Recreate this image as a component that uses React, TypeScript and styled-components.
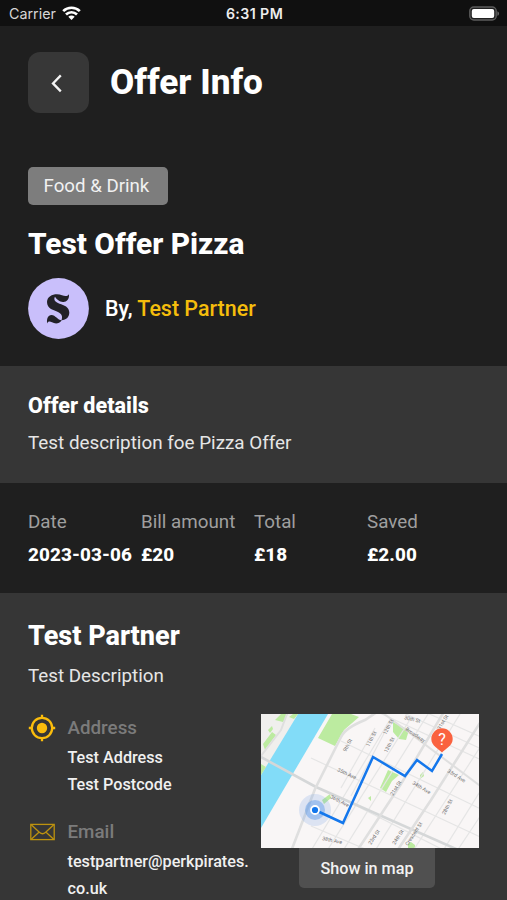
import React from "react";
import styled, { createGlobalStyle } from "styled-components";

const GlobalStyle = createGlobalStyle`
  * { box-sizing: border-box; }
  html, body { margin: 0; padding: 0; background: #1f1f1f; overflow: hidden; }
  body { font-family: Roboto, "Liberation Sans", sans-serif; color: #fff; }
  svg { display: block; flex: none; }
`;

const Screen = styled.main`
  width: 507px;
  height: 900px;
  overflow: hidden;
  display: flex;
  flex-direction: column;
  background: #1f1f1f;
`;

const StatusBar = styled.header`
  flex: none;
  height: 26px;
  padding: 1px 7px 0 9px;
  display: grid;
  grid-template-columns: 1fr auto 1fr;
  align-items: center;
  background: #101010;
  font-family: Inter, sans-serif;
  font-size: 14.3px;
  line-height: 25px;
  color: #d6d6d6;
`;

const Carrier = styled.div`
  display: flex;
  align-items: center;
  gap: 6px;
`;

const Clock = styled.time`
  font-weight: 600;
  font-size: 14.2px;
  letter-spacing: 0.4px;
  color: #ededed;
`;

const Battery = styled.div`
  justify-self: end;
`;

const Hero = styled.section`
  flex: none;
  height: 340px;
  padding: 26px 28px 0;
  display: flex;
  flex-direction: column;
  align-items: flex-start;
`;

const TitleRow = styled.div`
  display: flex;
  align-items: center;
  gap: 21.5px;
  height: 61px;
`;

const BackButton = styled.button`
  width: 60.5px;
  height: 61px;
  padding: 0;
  border: 0;
  border-radius: 12px;
  background: #373737;
  display: grid;
  place-items: center;
`;

const Text = styled.div<{ $size: number; $line: number; $weight?: number; $color?: string; $track?: number }>`
  font-size: ${(p) => p.$size}px;
  line-height: ${(p) => p.$line}px;
  font-weight: ${(p) => p.$weight ?? 400};
  color: ${(p) => p.$color ?? "#fff"};
  letter-spacing: ${(p) => p.$track ?? 0}px;
  white-space: nowrap;
`;

const Tag = styled.span`
  margin-top: 54px;
  height: 38px;
  width: 139.5px;
  padding-left: 15.5px;
  border-radius: 5px;
  background: #7d7d7d;
  color: #f1f1f1;
  font-size: 18.7px;
  line-height: 38px;
`;

const OfferTitle = styled.div`
  margin-top: 19px;
`;

const PartnerRow = styled.div`
  margin-top: 14px;
  display: flex;
  align-items: center;
  gap: 16px;
`;

const Accent = styled.span`
  color: #f5bd0c;
`;

const Details = styled.section`
  flex: none;
  height: 117px;
  padding: 26px 28px 0;
  background: #363636;
`;

const Amounts = styled.section`
  flex: none;
  height: 110px;
  padding: 26px 28px 0;
  display: grid;
  grid-template-columns: repeat(4, 113px);
`;

const Partner = styled.section`
  flex: 1;
  padding: 25px 28px 0;
  background: #363636;
  border-bottom: 1px solid #2a2224;
`;

const Columns = styled.div`
  margin-top: 16px;
  display: grid;
  grid-template-columns: 233px 218px;
  align-items: start;
`;

const Contacts = styled.div`
  display: flex;
  flex-direction: column;
  gap: 19.5px;
`;

const Contact = styled.div`
  display: grid;
  grid-template-columns: 39.5px 1fr;
`;

const ContactLines = styled.div`
  margin-top: 2px;
`;

const IconBox = styled.div`
  height: 28px;
  display: flex;
  align-items: center;
`;

const MapColumn = styled.div`
  display: flex;
  flex-direction: column;
  align-items: center;
`;

const MapButton = styled.button`
  width: 136px;
  height: 40px;
  margin-right: 6px;
  padding: 0;
  border: 0;
  border-radius: 0 0 5px 5px;
  background: #505050;
  color: #f2f2f2;
  font: 500 16.2px/39px Roboto, sans-serif;
`;

const WifiIcon = () => (
  <svg width="19" height="15" viewBox="0 0 19 15" fill="none" stroke="#fff" strokeWidth="2.7">
    <path d="M1.2 5.1C5.8.6 13.2.6 17.8 5.1" />
    <path d="M4 8.5C7.1 5.5 11.9 5.5 15 8.5" />
    <path d="M9.5 14 6.3 10.8C8.1 9.1 10.9 9.1 12.7 10.8Z" fill="#fff" stroke="none" />
  </svg>
);

const BatteryIcon = () => (
  <svg width="31" height="16" viewBox="0 0 31 16">
    <rect x=".8" y="1" width="26.4" height="13" rx="4" fill="#202020" stroke="#5c5c5c" strokeWidth="1.4" />
    <rect x="2.8" y="3" width="22.4" height="9" rx="2" fill="#fff" />
    <path d="M28.4 5.2C30.6 6 30.6 9 28.4 9.8Z" fill="#666" />
  </svg>
);

const ChevronIcon = () => (
  <svg width="14" height="20" viewBox="0 0 14 20" fill="none" stroke="#f4f4f4" strokeWidth="2.3">
    <path d="M9.8 2.4 2 10.4 9.8 18.4" />
  </svg>
);

const PartnerLogo = () => (
  <svg width="61" height="61" viewBox="0 0 61 61">
    <circle cx="30.5" cy="30.5" r="30.4" fill="#c9bffb" />
    <g fill="#222127">
      <path d="M40.9 16.2C39.6 18.4 37 18.4 34 17.2C28 14.8 19.2 17 19 24C19 31 26 32 30 34C33.5 35.7 35 38 33.5 42.2C38.5 42.2 41.3 39 41.3 34.6C41.3 28.8 36 27.3 31.5 25.7C27 24.1 25.3 21.6 27 18.8C29 21.8 32.5 24.8 36.5 23.8C40 22.9 41.4 19.7 40.9 16.2Z" />
      <path d="M19.2 45.4C18.4 40.8 20 37 23.5 37C27.5 37 29.5 42.2 33.8 42.2C31 46.2 27 46 24 44.3C21.5 43 20 43.4 19.2 45.4Z" />
    </g>
  </svg>
);

const TargetIcon = () => (
  <svg width="28" height="28" viewBox="0 0 28 28" fill="none" stroke="#fbbd0c" strokeWidth="2.3">
    <circle cx="14" cy="14" r="10.2" />
    <circle cx="14" cy="14" r="5.2" fill="#fbbd0c" stroke="none" />
    <path d="M14 .8V5M14 23v4.2M.8 14H5M23 14h4.2" />
  </svg>
);

const MailIcon = () => (
  <svg width="28" height="18" viewBox="0 0 28 18" fill="none" stroke="#bd920f" strokeWidth="1.3">
    <rect x="2.8" y="1.4" width="23.4" height="15.2" />
    <path d="M3 1.6 11.6 9.4Q14.5 12 17.4 9.4L26 1.6M3 16.4 11.2 9M26 16.4 17.8 9" />
  </svg>
);

const avenues = [
  "M108 -6 240 55", "M132 -6 240 44", "M155 -6 240 32", "M80 27 230 100",
  "M50 44 230 128", "M86 87 210 150", "M50 112 130 146",
];
const streets = [
  "M48 140 130 4", "M64 140 150 4", "M80 140 172 -8", "M112 140 204 -8",
  "M150 140 225 24", "M180 140 230 60", "M194 140 230 86",
  "M80 74 114 14", "M90 82 128 10",
];

const labels: [number, number, number, string][] = [
  [85, 38, -62, "9th St"], [76, 57, 25, "35th Ave"], [69, 84, 27, "36th Ave"], [61, 126, 12, "38th Ave"],
  [108, 33, -62, "11th St"], [125, 21, -62, "12th St"], [126, 39, -62, "13th St"],
  [179, 16, -58, "31st St"], [143, 5, 14, "30th St"], [186, 58, 32, "33rd Ave"], [151, 70, 31, "34th Ave"],
  [132, 82, -58, "21st St"], [184, 101, -62, "28th St"], [110, 131, -57, "23rd St"],
  [134, 131, -57, "24th St"], [147, 132, -57, "Crescent St"],
];

const RouteMap = () => (
  <svg width="218" height="134" viewBox="0 0 218 134">
    <rect width="218" height="134" fill="#f9f6f6" />
    <path d="M0 0H38L0 62Z" fill="#f0efed" />
    <path d="M37 0H67L0 114V61Z" fill="#82dcf8" />
    <g fill="#bceba0">
      <path d="M57 24 74 32 83 16 98 3 90 0H71Z" />
      <path d="M132 8 148 16 145 26 138 25 132 18Z" />
      <path d="M127 56 138 61 131 67 125 78 119 74Z" />
      <path d="M14 6 20 0H27L22 8ZM2 30 11 18 15 21 4 36ZM28 3 32 0H37L33 5ZM0 50 5 53 0 61ZM7 16 11 12 12 15 9 19Z" />
      <path d="M61 86 69 80 70 84 63 90ZM159 61 162 58 163 62 159 65ZM147 134V130L150 128 154 131V134ZM107 84 110 82V87Z" />
    </g>
    <g fill="none" stroke="#e5e5e5" strokeWidth="1.2">
      {avenues.map((d) => <path key={d} d={d} />)}
      {streets.map((d) => <path key={d} d={d} />)}
    </g>
    <g fill="none" stroke="#dfdfdf" strokeWidth="2.6">
      <path d="M-2 42 55 73 220 146" stroke="#d5d7d8" />
      <path d="M29 140 54 75 80 23Q84 14 104 6L116 -2" />
      <path d="M94 140 140 70 184 -4M134 140 170 86 222 4" />
      <path d="M118 -4 222 74" strokeWidth="2" />
      <path d="M26 0 20 16 0 42" strokeWidth="2" />
    </g>
    <g fill="#707070" fontFamily="Roboto, sans-serif" fontSize="5.2">
      {labels.map(([x, y, angle, name]) => (
        <text key={name} transform={`translate(${x} ${y}) rotate(${angle})`}>{name}</text>
      ))}
      <text transform="translate(144 16) rotate(34)" fontSize="5.2">Broadway</text>
    </g>
    <circle cx="54" cy="96" r="16" fill="#679de8" fillOpacity=".2" />
    <circle cx="54" cy="96" r="10" fill="#438be8" fillOpacity=".38" />
    <path d="M54 96 82 109 112 43 144 62 156 46 171 57 181 40" fill="none" stroke="#1477ec" strokeWidth="2.5" />
    <circle cx="54" cy="96" r="4" fill="#1477ec" stroke="#fff" strokeWidth="1.8" />
    <path d="M170.3 25A10.7 10.7 0 1 1 191.7 25C191.7 32 184 35 181 38.5C178 35 170.3 32 170.3 25Z" fill="#fa623f" />
    <text x="181" y="31" textAnchor="middle" fill="#fff" fontFamily="Roboto, sans-serif" fontSize="16">?</text>
  </svg>
);

const amounts = [
  ["Date", "2023-03-06"],
  ["Bill amount", "£20"],
  ["Total", "£18"],
  ["Saved", "£2.00"],
];

const contacts = [
  { icon: <TargetIcon />, label: "Address", lines: ["Test Address", "Test Postcode"] },
  { icon: <MailIcon />, label: "Email", lines: ["testpartner@perkpirates.", "co.uk"] },
];

export default function App() {
  return (
    <>
      <GlobalStyle />
      <Screen>
        <StatusBar>
          <Carrier>Carrier <WifiIcon /></Carrier>
          <Clock>6:31 PM</Clock>
          <Battery><BatteryIcon /></Battery>
        </StatusBar>
        <Hero>
          <TitleRow>
            <BackButton aria-label="Back"><ChevronIcon /></BackButton>
            <Text as="h1" $size={35.2} $line={63} $weight={800}>Offer Info</Text>
          </TitleRow>
          <Tag>Food &amp; Drink</Tag>
          <OfferTitle>
            <Text $size={29.8} $line={40} $weight={800}>Test Offer Pizza</Text>
          </OfferTitle>
          <PartnerRow>
            <PartnerLogo />
            <Text $size={21.45} $line={30} $weight={500}>By, <Accent>Test Partner</Accent></Text>
          </PartnerRow>
        </Hero>
        <Details>
          <Text $size={21.6} $line={28} $weight={800}>Offer details</Text>
          <Text $size={18.85} $line={46} $color="#e6e6e6">Test description foe Pizza Offer</Text>
        </Details>
        <Amounts>
          {amounts.map(([name, value]) => (
            <div key={name}>
              <Text $size={18.8} $line={26} $color="#9f9f9f">{name}</Text>
              <Text $size={18.9} $line={39} $weight={800} $track={0.08}>{value}</Text>
            </div>
          ))}
        </Amounts>
        <Partner>
          <Text $size={27} $line={36} $weight={800}>Test Partner</Text>
          <Text $size={18.8} $line={44} $color="#e6e6e6">Test Description</Text>
          <Columns>
            <Contacts>
              {contacts.map(({ icon, label, lines }) => (
                <Contact key={label}>
                  <IconBox>{icon}</IconBox>
                  <div>
                    <Text $size={18.8} $line={28} $weight={500} $color="#7b7b7b">{label}</Text>
                    <ContactLines>
                      {lines.map((line) => (
                        <Text key={line} $size={16.2} $line={27} $weight={500} $color="#f0f0f0">{line}</Text>
                      ))}
                    </ContactLines>
                  </div>
                </Contact>
              ))}
            </Contacts>
            <MapColumn>
              <RouteMap />
              <MapButton>Show in map</MapButton>
            </MapColumn>
          </Columns>
        </Partner>
      </Screen>
    </>
  );
}
